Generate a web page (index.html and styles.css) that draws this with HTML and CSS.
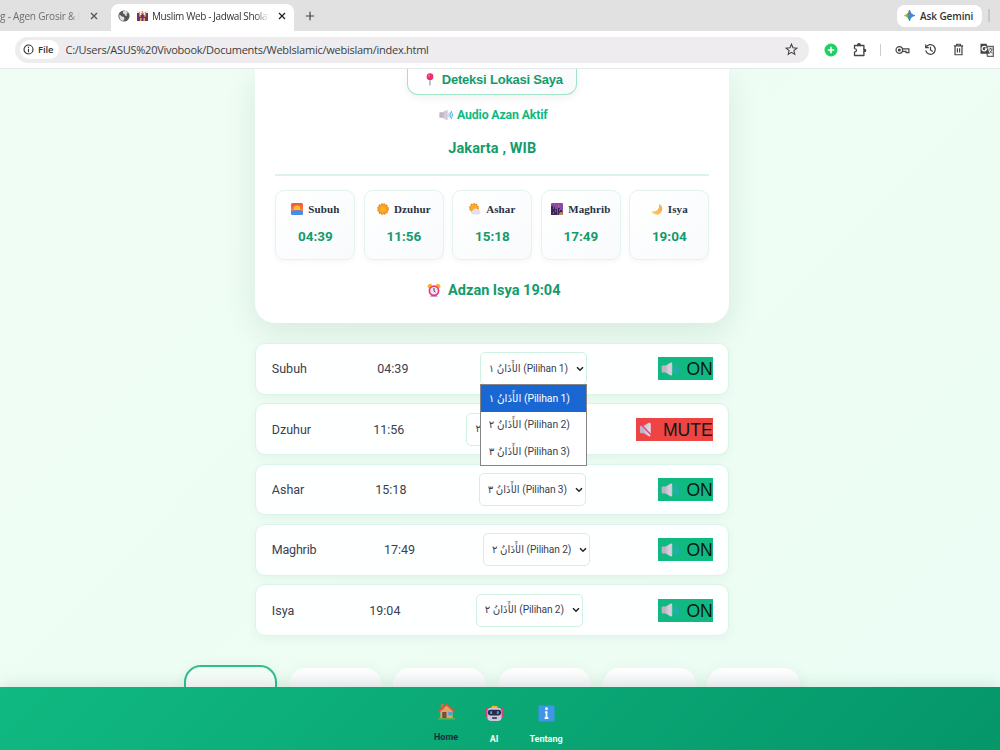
FILE: index.html
```html
<!DOCTYPE html>
<html lang="id">
<head>
<meta charset="utf-8">
<title>Muslim Web - Jadwal Sholat</title>
<link rel="stylesheet" href="styles.css">
</head>
<body>
<svg class="defs" aria-hidden="true">
  <defs>
    <linearGradient id="horn" x1="0" x2="1"><stop offset="0" stop-color="#c3bbca"/><stop offset="1" stop-color="#e6deea"/></linearGradient>
    <linearGradient id="sky" x1="0" y1="0" x2="0" y2="1"><stop offset="0" stop-color="#f4513e"/><stop offset=".65" stop-color="#fb8a3c"/></linearGradient>
    <radialGradient id="sun"><stop offset="0" stop-color="#ffc02e"/><stop offset="1" stop-color="#f09a1c"/></radialGradient>
    <linearGradient id="moon" x1="0" y1="1" x2="1" y2="0"><stop offset="0" stop-color="#ffcf4e"/><stop offset="1" stop-color="#f3a35f"/></linearGradient>
    <linearGradient id="gem" x1="0" x2="1"><stop offset="0" stop-color="#f8c51c"/><stop offset=".4" stop-color="#55a36d"/><stop offset=".55" stop-color="#3b82f6"/><stop offset="1" stop-color="#3489fb"/></linearGradient>
    <symbol id="speaker" viewBox="0 0 20 16">
      <rect x=".5" y="4" width="5.500" height="8" rx="1.200" fill="#bdb4c5"/><path d="M5 4 10.500.8Q12.500.3 12.500 2v12q0 1.700-2 1.200L5 12z" fill="url(#horn)"/><path d="M11.300 1.500v13" stroke="#b9afc3" stroke-width=".8"/>
      <path d="M14 5.500q1.700 2.500 0 5M15.700 3.600q3 4.400 0 8.800M17.400 2q4 6 0 12" fill="none" stroke="#3c9be8" stroke-width="1.100"/>
    </symbol>
    <symbol id="muted" viewBox="0 0 16 16">
      <rect x="1" y="4" width="5" height="8" rx="1.200" fill="#bdb4c5"/><path d="M5 4 10.500.8Q12.500.3 12.500 2v12q0 1.700-2 1.200L5 12z" fill="url(#horn)"/><path d="m1.500 2 12 12.500" stroke="#ee3b78" stroke-width="1.500"/>
    </symbol>
    <symbol id="chev" viewBox="0 0 8 6"><path d="m1 1.200 3 3 3-3" fill="none" stroke="#1f2937" stroke-width="1.600"/></symbol>
  </defs>
</svg>

<header class="browser">
  <div class="tabstrip">
    <div class="tab tab-old"><span class="tab-title old-title">g - Agen Grosir &amp; P</span>
      <svg class="x" viewBox="0 0 8 8"><path d="m1 1 6 6M7 1 1 7"/></svg></div>
    <div class="tab tab-active">
      <svg class="globe" viewBox="0 0 12 12"><circle cx="6" cy="6" r="5.600" fill="#54575b"/><path d="M1.500 4.500 4 6.500l2 .5.500 2-1.500 2C2.500 10.500.8 8 1.500 4.500zM5 1.200l3-.2 2 2-1.500.8L9 6 7 5.500 6.500 4 5 3.500z" fill="#dfe1e4"/></svg>
      <svg class="mosque" viewBox="0 0 11 10"><path d="M0 0h11v10H0z" fill="#f9ead2"/><path d="M0 10V2h2v3l1.500 1V4h1V2h2v2h1v2L9 5V2h2v8z" fill="#6a3568"/><path d="M2 1h1v4H2zM8 1h1v4H8zM5 0h1v3H5z" fill="#ef8b2f"/><path d="M3 7h1.500v3H3zM6.500 7H8v3H6.500z" fill="#f2a553"/></svg>
      <span class="tab-title new-title">Muslim Web - Jadwal Sholat</span>
      <svg class="x dark" viewBox="0 0 8 8"><path d="m1 1 6 6M7 1 1 7"/></svg>
    </div>
    <svg class="plus" viewBox="0 0 10 10"><path d="M5 .8v8.400M.8 5h8.400"/></svg>
    <div class="gemini"><svg viewBox="0 0 12 12"><path d="M6 0Q6.700 5.300 12 6 6.700 6.700 6 12 5.300 6.700 0 6 5.300 5.300 6 0z" fill="url(#gem)" stroke="url(#gem)" stroke-width="1.200"/><path d="M6 0q.3 2.500 1.500 4L6 5.500 4.500 4Q5.700 2.500 6 0z" fill="#ec4a45"/><path d="M4.500 8 6 6.500 7.500 8Q6.300 9.500 6 12 5.700 9.500 4.500 8z" fill="#26a862"/></svg><span>Ask Gemini</span></div>
    <i class="strip-rule"></i>
  </div>
  <div class="toolbar">
    <div class="omnibox">
      <div class="file-chip"><svg viewBox="0 0 12 12"><circle cx="6" cy="6" r="4.900" fill="none" stroke="#333" stroke-width="1.200"/><path d="M6 5.300V9M6 3v1.300" stroke="#333" stroke-width="1.200"/></svg><span>File</span></div>
      <span class="url">C:/Users/ASUS%20Vivobook/Documents/WebIslamic/webislam/index.html</span>
      <svg class="star" viewBox="0 0 13 13"><path d="m6.500 1.200 1.500 3.600 3.900.3-3 2.500.9 3.800-3.300-2-3.300 2 .9-3.800-3-2.500 3.900-.3z"/></svg>
    </div>
    <div class="tools">
      <svg class="t-add" viewBox="0 0 14 14"><circle cx="7" cy="7" r="6.500" fill="#1fd160"/><path d="M7 3.800v6.400M3.800 7h6.400" stroke="#fff" stroke-width="1.600"/></svg>
      <svg class="t-ext" viewBox="0 0 14 14"><path d="M1.500 2.500h3.200Q4.900.7 6 .7t1.300 1.800h3.600v3.800q1.700.2 1.700 1.200T10.900 8.700v3.800H1.500V9.200q2-.4 2-1.900t-2-1.900z" stroke-linejoin="round"/><path d="M4.800 2.500Q4.900.8 6 .8t1.200 1.700zM11 6.300q1.600.2 1.600 1.200T11 8.700z" fill="#444"/></svg>
      <i class="tool-rule"></i>
      <svg class="t-key" viewBox="0 0 16 12"><circle cx="4.600" cy="6" r="3.500"/><circle cx="4.600" cy="6" r="1" fill="#444"/><path d="M8 4.700h6.800v4h-3V7.500H8"/></svg>
      <svg class="t-hist" viewBox="0 0 14 14"><path d="M2.300 4.500A5.200 5.200 0 1 1 1.800 8M1.800 1.500v3.400h3.400M7 4v3.400l2.400 1.700"/></svg>
      <svg class="t-bin" viewBox="0 0 12 14"><path d="M1 3h10M4 2.500V1.300h4v1.200M2.200 3v9.700h7.600V3M4.800 5.500v4.800M7.200 5.500v4.800"/></svg>
      <svg class="t-tr" viewBox="0 0 14 14"><path d="M6 3.500h7.300v9.800H7.500z" fill="#fff" stroke="#666"/><path d="M.5.700h6l3 10H.5z" fill="#444"/><path d="M6.300 4.400A2.300 2.300 0 1 0 6.600 6H4.800" fill="none" stroke="#fff"/><path d="M8.500 6h4M10.500 5v1M12 6q-.5 3-3 4.500M9.500 7.500l2.800 3" stroke="#555" stroke-width=".9"/></svg>
    </div>
  </div>
</header>

<main class="page">
  <section class="card">
    <button class="detect"><svg viewBox="0 0 8 14"><path d="M4 6v7.500" stroke="#8b93a1" stroke-width="1.200"/><circle cx="4" cy="4" r="3.600" fill="#ee2f6d"/><circle cx="3" cy="2.900" r="1" fill="#f77ba5"/></svg><span>Deteksi Lokasi Saya</span></button>
    <p class="audio"><svg><use href="#speaker"/></svg><span>Audio Azan Aktif</span></p>
    <h2 class="place">Jakarta , WIB</h2>
    <div class="times">
      <article class="time"><h3><svg viewBox="0 0 12 12"><rect width="12" height="12" rx="1.500" fill="url(#sky)"/><circle cx="6" cy="5.800" r="3.200" fill="#ffc42c"/><path d="M0 8h12v2.500Q12 12 10.500 12h-9Q0 12 0 10.500z" fill="#3f91f0"/><path d="M0 8q6-2 12 0v1H0z" fill="#7b72d7"/></svg><span>Subuh</span></h3><b>04:39</b></article>
      <article class="time"><h3><svg viewBox="0 0 12 12"><circle cx="6" cy="6" r="5.200" fill="#f5a623" stroke="#ee7b22" stroke-width="1.300" stroke-dasharray="1.600 1.120"/><circle cx="6" cy="6" r="4.500" fill="url(#sun)"/></svg><span>Dzuhur</span></h3><b>11:56</b></article>
      <article class="time"><h3><svg viewBox="0 0 12 12"><circle cx="5" cy="5" r="4.300" fill="#f7ad25" stroke="#ee8222" stroke-width="1.200" stroke-dasharray="1.600 1.100"/><path d="M4 11.500a2.200 2.200 0 0 1 0-4.300 3.200 3.200 0 0 1 5-.8 2.700 2.700 0 0 1 1 5.100z" fill="#e5dfed"/></svg><span>Ashar</span></h3><b>15:18</b></article>
      <article class="time"><h3><svg viewBox="0 0 12 12"><rect width="12" height="12" rx="1" fill="#8b4aaa"/><path d="M0 12V3h2v1h2v2h2v6M7 12V5h2v2h2v5" fill="#3c2557"/><path d="M8 12q0-3 2-3t2 3" fill="#b89056"/><path d="M2 5h1M4 8h1M8 7h1M2 10h1M7 3h1" stroke="#d9a45a"/></svg><span>Maghrib</span></h3><b>17:49</b></article>
      <article class="time"><h3><svg viewBox="0 0 12 12"><path d="M8 .8a5.700 5.700 0 1 1-7.600 7.500Q5 9.200 7 6.300 8.600 3.800 8 .8z" fill="url(#moon)"/></svg><span>Isya</span></h3><b>19:04</b></article>
    </div>
    <p class="next"><svg viewBox="0 0 14 15"><path d="M.5 4Q.5.500 4.500.8L5 3 2 5.500zM13.500 4Q13.500.500 9.500.8L9 3l3 2.500z" fill="#f9b12c"/><path d="m3 14 2-2.500h4L11 14z" fill="#c8a6e8"/><circle cx="7" cy="7.800" r="4.600" fill="#efe9f5" stroke="#ed376f" stroke-width="1.700"/><path d="M7 5v3l1.500 1.200" fill="none" stroke="#503a63"/></svg><span>Adzan Isya 19:04</span></p>
  </section>

  <section class="list">
    <div class="row"><span class="name n-subuh">Subuh</span><span class="clock">04:39</span>
      <div class="select"><span class="opt-text">الأَذَانُ ١ (Pilihan 1)</span><svg><use href="#chev"/></svg>
        <div class="menu"><div class="option chosen"><span class="opt-text">الأَذَانُ ١ (Pilihan 1)</span></div><div class="option"><span class="opt-text">الأَذَانُ ٢ (Pilihan 2)</span></div><div class="option"><span class="opt-text">الأَذَانُ ٣ (Pilihan 3)</span></div></div>
      </div>
      <div class="toggle on"><svg><use href="#speaker"/></svg><span>ON</span></div></div>
    <div class="row"><span class="name n-dzuhur">Dzuhur</span><span class="clock">11:56</span>
      <div class="select"><span class="opt-text">الأَذَانُ ٢ (Pilihan 2)</span><svg><use href="#chev"/></svg></div>
      <div class="toggle off"><svg><use href="#muted"/></svg><span>MUTE</span></div></div>
    <div class="row"><span class="name n-ashar">Ashar</span><span class="clock">15:18</span>
      <div class="select"><span class="opt-text">الأَذَانُ ٣ (Pilihan 3)</span><svg><use href="#chev"/></svg></div>
      <div class="toggle on"><svg><use href="#speaker"/></svg><span>ON</span></div></div>
    <div class="row"><span class="name n-maghrib">Maghrib</span><span class="clock">17:49</span>
      <div class="select"><span class="opt-text">الأَذَانُ ٢ (Pilihan 2)</span><svg><use href="#chev"/></svg></div>
      <div class="toggle on"><svg><use href="#speaker"/></svg><span>ON</span></div></div>
    <div class="row"><span class="name n-isya">Isya</span><span class="clock">19:04</span>
      <div class="select"><span class="opt-text">الأَذَانُ ٢ (Pilihan 2)</span><svg><use href="#chev"/></svg></div>
      <div class="toggle on"><svg><use href="#speaker"/></svg><span>ON</span></div></div>
  </section>

  <section class="tiles"><i class="tile current"></i><i class="tile"></i><i class="tile"></i><i class="tile"></i><i class="tile"></i><i class="tile"></i></section>
</main>

<nav class="bottom">
  <a class="link home"><svg viewBox="0 0 18 18"><path d="M2.500 8 9 2l6.500 6v8h-13z" fill="#e0a36e"/><path d="M3 1h3v6H3z" fill="#b97850"/><path d="M.8 9 9 1.500 17.200 9" fill="none" stroke="#e6532d" stroke-width="2"/><path d="M4.500 9.500H9V16H4.500z" fill="#7b4c3c"/><path d="M11 9.500h4v3.500h-4z" fill="#36a7ee"/><path d="M0 16h18v1.500H0z" fill="#5fb548"/></svg><span>Home</span></a>
  <a class="link ai"><svg viewBox="0 0 18 18"><path d="M.8 2v11M17.200 2v11" stroke="#d64273" stroke-width="1.500"/><path d="M6 1h6v3H6z" fill="#f7b620"/><rect x="1.500" y="3" width="15" height="14" rx="4" fill="#cfc5dc"/><rect x="2" y="5" width="14" height="6" rx="2.500" fill="#2b2948"/><path d="M5.500 6.500v3M12.500 6.500v3" stroke="#35a9ef" stroke-width="2"/><path d="M6.500 13.800h5" stroke="#3d3557" stroke-width="1.800"/></svg><span>AI</span></a>
  <a class="link about"><svg viewBox="0 0 18 18"><rect x=".5" y=".5" width="17" height="17" rx="1.500" fill="#3f96e8"/><path d="M7.500 7.500H9V14M7 14h4" fill="none" stroke="#fff" stroke-width="1.900"/><circle cx="9" cy="4" r="1.500" fill="#fff"/></svg><span>Tentang</span></a>
</nav>
</body>
</html>
```
FILE: styles.css
```css
* { box-sizing: border-box; }
body { margin: 0; height: 750px; overflow: hidden; display: flex; flex-direction: column; font-family: Roboto, "DejaVu Sans", sans-serif; color: #374151; }
.defs { position: absolute; width: 0; height: 0; }
svg { display: block; flex: none; }
h2, h3, p { margin: 0; }

.browser { flex: none; height: 69px; background: #fff; border-bottom: 1px solid #e4e8e7; font-family: "Open Sans", sans-serif; }
.tabstrip { height: 31px; background: #e1e1e1; display: flex; align-items: center; }
.tab { display: flex; align-items: center; }
.tab-old { width: 111px; }
.tab-title { font-size: 10px; white-space: nowrap; overflow: hidden; }
.old-title { width: 80px; margin-right: 10px; color: #6d6d6d; letter-spacing: -.2px; -webkit-mask-image: linear-gradient(90deg, #000 88%, transparent); }
.x { width: 8px; height: 8px; fill: none; stroke: #555; stroke-width: 1.3; }
.x.dark { stroke: #222; }
.tab-active { align-self: flex-end; width: 183px; height: 27px; background: #fff; border-radius: 8px 8px 0 0; padding: 0 0 3px 7px; }
.globe { width: 12px; height: 12px; }
.mosque { width: 11px; height: 10px; margin: 0 4px 0 7px; }
.new-title { width: 117px; margin-right: 9px; color: #333; letter-spacing: -.38px; -webkit-mask-image: linear-gradient(90deg, #000 88%, transparent); }
.plus { width: 10px; height: 10px; margin-left: 11px; fill: none; stroke: #444; stroke-width: 1.2; }
.gemini { margin-left: auto; width: 85px; height: 22px; border-radius: 8px; background: #fff; display: flex; align-items: center; gap: 5px; padding-left: 7px; font-size: 10px; font-weight: 600; letter-spacing: -.1px; color: #333; white-space: nowrap; }
.gemini svg { width: 11px; height: 11px; }
.strip-rule { width: 2px; height: 13px; background: #c8c8c8; margin: 0 10px 0 6px; }
.toolbar { height: 37px; display: flex; align-items: center; padding-left: 15px; }
.omnibox { width: 794px; height: 26px; border-radius: 13px; background: #eeecee; display: flex; align-items: center; padding: 0 11px 0 5px; }
.file-chip { width: 39px; height: 19px; border-radius: 10px; background: #fff; display: flex; align-items: center; gap: 4px; padding-left: 3px; font-size: 9.5px; font-weight: 600; letter-spacing: -.1px; color: #333; }
.file-chip svg { width: 11px; height: 11px; }
.url { margin-left: 6.5px; font-size: 11px; letter-spacing: -.255px; color: #3d3d3d; white-space: nowrap; }
.star { width: 13px; height: 13px; margin-left: auto; fill: none; stroke: #444; stroke-width: 1.1; }
.tools { display: flex; align-items: center; padding-left: 15px; }
.tools svg { fill: none; stroke: #444; stroke-width: 1.3; }
.tools .t-add { width: 14px; height: 14px; margin-right: 15px; stroke: none; }
.t-ext { width: 14px; height: 14px; margin-right: 13px; }
.tool-rule { width: 1px; height: 12px; background: #ccc; margin-right: 14px; }
.t-key { width: 15px; height: 12px; margin-right: 14px; }
.t-hist { width: 13px; height: 13px; margin-right: 16px; }
.t-bin { width: 11px; height: 13px; margin-right: 16px; }
.tools .t-tr { width: 14px; height: 14px; stroke: none; }

.page { flex: 1; min-height: 0; overflow: hidden; background: linear-gradient(135deg, #f0fdf4, #ecfdf5); display: flex; flex-direction: column; align-items: center; padding-right: 15.400px; }
.card { flex: none; width: 474px; height: 254px; background: #fff; border-radius: 0 0 20px 20px; box-shadow: 0 10px 32px rgba(5, 70, 40, .1); display: flex; flex-direction: column; align-items: center; }
.detect { flex: none; width: 170px; height: 26px; border: 1.5px solid #a0e5c8; border-top: 0; border-radius: 0 0 11px 11px; background: linear-gradient(135deg, #fff, #f8fafc); box-shadow: 0 3px 9px rgba(0, 0, 0, .06); display: flex; align-items: center; justify-content: center; gap: 8px; padding: 0 0 5px 4px; font: bold 13px "Liberation Sans", sans-serif; letter-spacing: -.2px; color: #149b6b; white-space: nowrap; }
.detect svg { width: 8px; height: 13px; }
.audio { display: flex; align-items: center; gap: 4px; height: 17px; margin-top: 11px; padding-left: 2px; font-size: 12.3px; font-weight: 700; letter-spacing: -.15px; color: #10b981; }
.audio svg { width: 14px; height: 12px; }
.place { margin-top: 16px; height: 20px; line-height: 20px; font-size: 14.5px; letter-spacing: .1px; color: #149b6b; }
.times { margin-top: 15px; width: 434px; border-top: 2px solid #daf4e9; padding-top: 14px; display: flex; gap: 8.4px; margin-bottom: 20px; }
.time { flex: 1; height: 70px; border: 1px solid #e1f5ed; border-radius: 9px; background: linear-gradient(135deg, #fff, #f8fafc); box-shadow: 0 2px 6px rgba(0, 0, 0, .035); display: flex; flex-direction: column; align-items: center; padding-top: 10px; }
.time h3 { display: flex; align-items: center; gap: 5px; height: 16px; font: bold 11px "Liberation Serif", serif; letter-spacing: .1px; color: #293241; }
.time h3 svg { width: 12px; height: 12px; }
.time b { margin-top: 10px; font-size: 13.5px; line-height: 18px; color: #149b6b; }
.next { display: flex; align-items: center; gap: 7px; height: 20px; padding-left: 3px; font-size: 14.5px; font-weight: 700; color: #149b6b; }
.next svg { width: 14px; height: 15px; }

.list { flex: none; width: 474px; margin-top: 20px; display: flex; flex-direction: column; gap: 8.400px; }
.row { height: 51.900px; border: 1px solid #d9f4e8; border-radius: 10px; background: rgba(255, 255, 255, .94); box-shadow: 0 3px 10px rgba(5, 80, 50, .05); display: flex; align-items: center; justify-content: space-between; padding: 0 15.500px 0 15.500px; font-size: 12.500px; white-space: nowrap; }
.n-subuh { width: 34px; } .n-dzuhur { width: 39px; } .n-ashar { width: 31px; } .n-maghrib { width: 44px; letter-spacing: -.2px; } .n-isya { width: 22px; }
.clock { width: 31px; }
.select { position: relative; width: 107px; height: 33px; border: 1px solid #cef1e1; border-radius: 5px; background: #fff; display: flex; align-items: center; justify-content: space-between; padding: 0 2px 0 8px; }
.select > svg { width: 8px; height: 6px; }
.opt-text { line-height: 16px; font-size: 10.2px; letter-spacing: -.13px; }
.option .opt-text { font-size: 10.400px; letter-spacing: -.1px; }
.menu { position: absolute; z-index: 2; left: -1px; top: 31px; width: 107px; border: 1px solid #858585; background: #fff; }
.option { height: 26.600px; padding-left: 8px; display: flex; align-items: center; }
.chosen { background: #1967d2; color: #fff; }
.toggle { height: 23px; display: flex; align-items: center; padding-left: 3px; font: 17.600px "Liberation Sans", sans-serif; color: #071b14; }
.toggle span { padding-top: 2px; }
.on { width: 54.5px; background: #10b981; justify-content: space-between; }
.on svg { width: 18px; height: 14px; }
.off { width: 77px; background: #ef4444; justify-content: space-between; }
.off svg { width: 15px; height: 15px; }

.tiles { flex: none; width: 616px; margin-top: 29px; display: flex; justify-content: space-between; align-items: flex-start; }
.tile { width: 93px; height: 60px; margin-top: 3px; border-radius: 17px; background: linear-gradient(#fff, #f3f5f7 30%); box-shadow: 0 3px 15px rgba(5, 70, 40, .07); }
.current { margin-top: 0; border: 2px solid #2fbf8f; background: linear-gradient(#effdf5, #f8faf9 30%); }

.bottom { position: relative; flex: none; height: 63px; background: linear-gradient(135deg, #10b981, #059669); box-shadow: 0 -3px 14px rgba(5, 70, 40, .1); display: flex; justify-content: center; align-items: flex-start; padding: 16px 4px 0 0; color: #f0fff8; font-size: 9px; font-weight: 700; }
.link { display: flex; flex-direction: column; align-items: center; }
.link svg { width: 17px; height: 17px; }
.link span { line-height: 12px; }
.home { width: 26px; color: #1f2937; gap: 11px; }
.ai { width: 18px; margin: 2px 0 0 26px; gap: 11px; }
.about { width: 34px; margin: 2px 0 0 26px; gap: 11px; }
```
